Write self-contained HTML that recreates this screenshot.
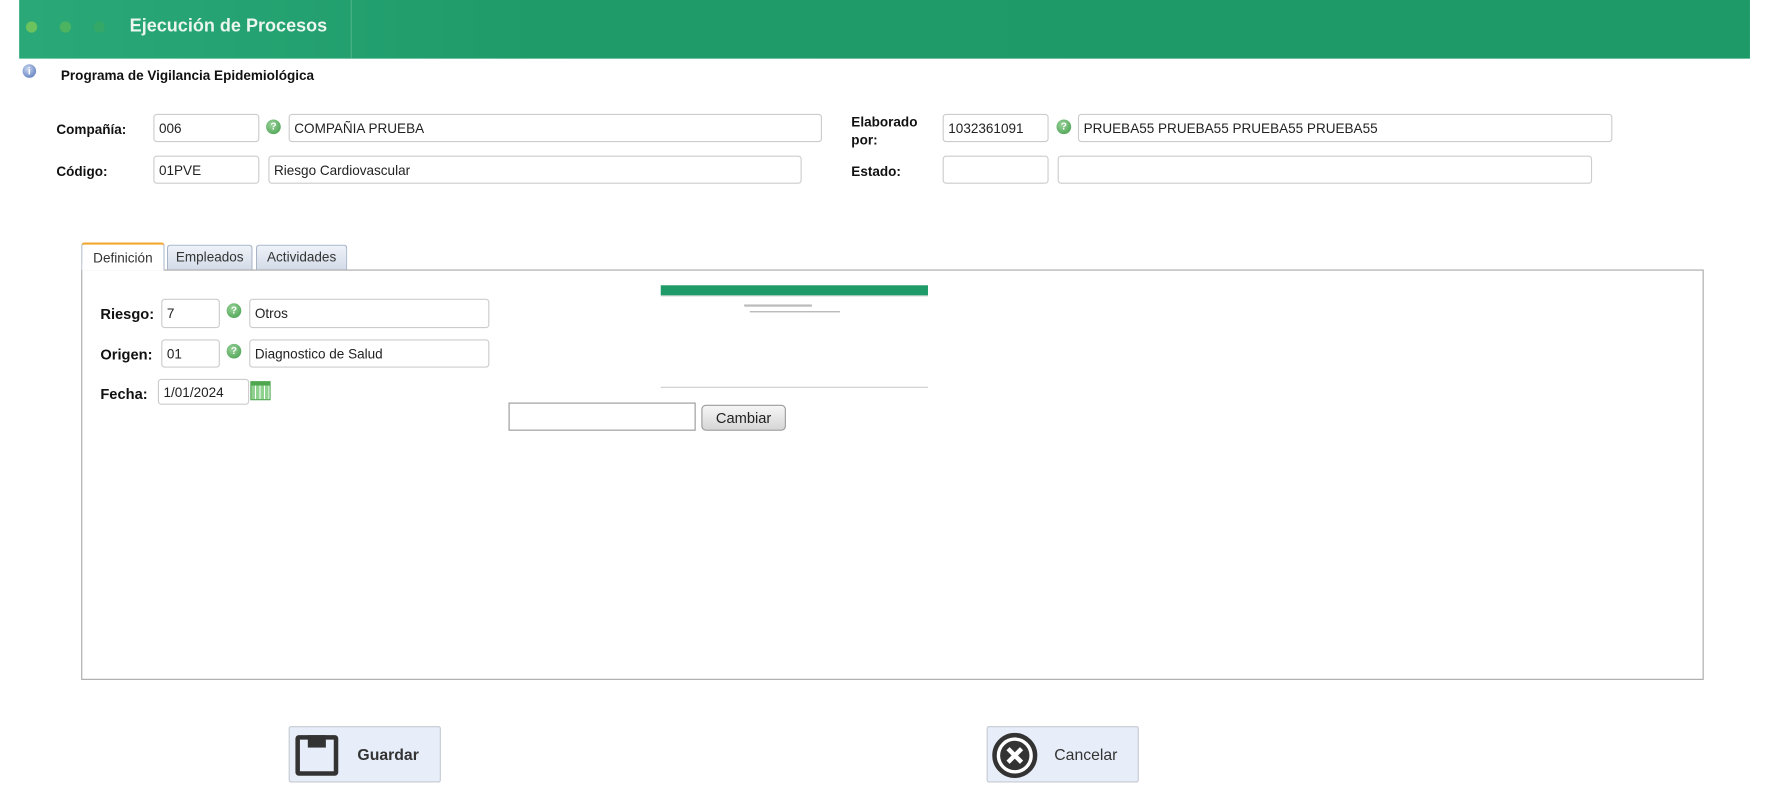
<!DOCTYPE html>
<html><head><meta charset="utf-8"><style>
html,body{margin:0;padding:0;background:#fff;width:1768px;height:787px;overflow:hidden}
#w{position:absolute;left:0;top:0;width:1568px;height:698px;transform:scale(1.12755);transform-origin:0 0;font-family:"Liberation Sans",sans-serif;color:#222}
.a{position:absolute}
.lbl{position:absolute;font-weight:bold;font-size:12px;color:#111}
.in{position:absolute;box-sizing:border-box;border:1px solid #ccc;border-radius:3px;background:#fff;font-size:12px;padding-left:4px;display:flex;align-items:center;color:#222}
.q{position:absolute;width:13px;height:13px;border-radius:50%;background:radial-gradient(circle at 40% 35%,#9ad39a,#3f9a48);color:#fff;font-size:9px;font-weight:bold;text-align:center;line-height:13px}
.tab{position:absolute;top:217px;height:22px;box-sizing:border-box;border:1px solid #a9b6c8;border-bottom:none;border-radius:3px 3px 0 0;background:linear-gradient(#eef2f8,#d3dbe8);font-size:12px;color:#333;text-align:center;line-height:21px}
.btn{position:absolute;top:644px;width:135px;height:50px;box-sizing:border-box;border:1px solid #c4c9d2;border-radius:2px;background:#e8eef9;font-size:14px;font-weight:bold;color:#333}
</style></head><body><div id="w">
<div class="a" style="left:17px;top:0;width:1535px;height:52px;background:linear-gradient(90deg,#2aa878,#1f9b69 30%,#1e9a68)"></div>
<div class="a" style="left:23px;top:19px;width:10px;height:10px;border-radius:50%;background:#6cc35e"></div>
<div class="a" style="left:53px;top:19px;width:10px;height:10px;border-radius:50%;background:#4cb460"></div>
<div class="a" style="left:83px;top:19px;width:10px;height:10px;border-radius:50%;background:#34a867"></div>
<div class="a" style="left:115px;top:15px;font-size:16px;font-weight:bold;color:#eaf6ee">Ejecución de Procesos</div>
<div class="a" style="left:311px;top:0;width:1px;height:52px;background:#4cb487"></div>
<div class="a" style="left:20px;top:57px;width:12px;height:12px;border-radius:50%;background:radial-gradient(circle at 40% 35%,#c9d6f0,#4a6db5);color:#fff;font-size:9px;font-weight:bold;text-align:center;line-height:12px">i</div>
<div class="lbl" style="left:54px;top:60px">Programa de Vigilancia Epidemiológica</div>

<div class="lbl" style="left:50px;top:108px">Compañía:</div>
<div class="in" style="left:136px;top:101px;width:94px;height:25px">006</div>
<div class="q" style="left:236px;top:106px">?</div>
<div class="in" style="left:256px;top:101px;width:473px;height:25px">COMPAÑIA PRUEBA</div>
<div class="lbl" style="left:50px;top:145px">Código:</div>
<div class="in" style="left:136px;top:138px;width:94px;height:25px">01PVE</div>
<div class="in" style="left:238px;top:138px;width:473px;height:25px">Riesgo Cardiovascular</div>

<div class="lbl" style="left:755px;top:100px;line-height:16px">Elaborado<br>por:</div>
<div class="in" style="left:836px;top:101px;width:94px;height:25px">1032361091</div>
<div class="q" style="left:937px;top:106px">?</div>
<div class="in" style="left:956px;top:101px;width:474px;height:25px">PRUEBA55 PRUEBA55 PRUEBA55 PRUEBA55</div>
<div class="lbl" style="left:755px;top:145px">Estado:</div>
<div class="in" style="left:836px;top:138px;width:94px;height:25px"></div>
<div class="in" style="left:938px;top:138px;width:474px;height:25px"></div>

<div class="a" style="left:72px;top:239px;width:1439px;height:364px;box-sizing:border-box;border:1px solid #a8a8a8;background:#fff"></div>
<div class="tab" style="left:72px;width:74px;top:215px;height:25px;background:#fff;border-top:2px solid #f0a830;line-height:24px">Definición</div>
<div class="tab" style="left:148px;width:76px">Empleados</div>
<div class="tab" style="left:227px;width:81px">Actividades</div>

<div class="lbl" style="left:89px;top:271px;font-size:13px">Riesgo:</div>
<div class="in" style="left:143px;top:265px;width:52px;height:26px">7</div>
<div class="q" style="left:201px;top:269px">?</div>
<div class="in" style="left:221px;top:265px;width:213px;height:26px">Otros</div>
<div class="lbl" style="left:89px;top:307px;font-size:13px">Origen:</div>
<div class="in" style="left:143px;top:301px;width:52px;height:25px">01</div>
<div class="q" style="left:201px;top:305px">?</div>
<div class="in" style="left:221px;top:301px;width:213px;height:25px">Diagnostico de Salud</div>
<div class="lbl" style="left:89px;top:342px;font-size:13px">Fecha:</div>
<div class="in" style="left:140px;top:336px;width:81px;height:23px">1/01/2024</div>
<div class="a" style="left:222px;top:338px;width:18px;height:17px;box-sizing:border-box;border:1px solid #4ea64e;background:repeating-linear-gradient(90deg,#8fd18f 0 3px,#fff 3px 4px);border-top:4px solid #4ea64e"></div>

<div class="a" style="left:586px;top:253px;width:237px;height:9px;background:#1f9b69"></div>
<div class="a" style="left:586px;top:262px;width:237px;height:1px;background:#ddd"></div>
<div class="a" style="left:586px;top:343px;width:237px;height:1px;background:#ccc"></div>
<div class="a" style="left:660px;top:270px;width:60px;height:2px;background:#bbb"></div>
<div class="a" style="left:665px;top:276px;width:80px;height:1px;background:#aaa"></div>

<div class="in" style="left:451px;top:357px;width:166px;height:25px;border-color:#999;border-radius:0"></div>
<div class="a" style="left:622px;top:359px;width:75px;height:23px;box-sizing:border-box;border:1px solid #999;border-radius:4px;background:linear-gradient(#f6f6f6,#d6d6d6);font-size:13px;text-align:center;line-height:21px;color:#222">Cambiar</div>

<div class="btn" style="left:256px">
<div class="a" style="left:5px;top:7px;width:38px;height:36px;box-sizing:border-box;border:4px solid #333;border-radius:3px"></div>
<div class="a" style="left:16px;top:7px;width:16px;height:11px;background:#333"></div>
<div class="a" style="left:60px;top:16px">Guardar</div></div>
<div class="btn" style="left:875px">
<svg class="a" style="left:3px;top:4px" width="42" height="42" viewBox="0 0 42 42"><circle cx="21" cy="21" r="18" fill="#fff" stroke="#333" stroke-width="4"/><circle cx="21" cy="21" r="13" fill="#333"/><path d="M15 15L27 27M27 15L15 27" stroke="#fff" stroke-width="4"/></svg>
<div class="a" style="left:59px;top:16px;font-weight:normal">Cancelar</div></div>
</div></body></html>
